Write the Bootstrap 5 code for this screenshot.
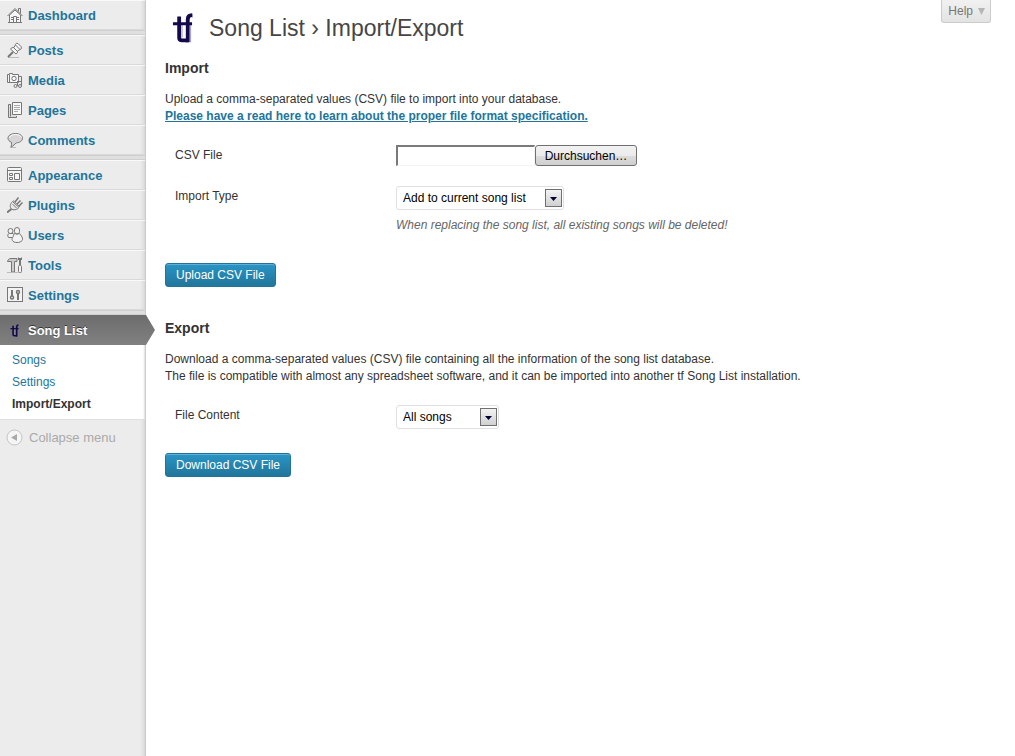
<!DOCTYPE html>
<html lang="en">
<head>
<meta charset="utf-8">
<meta name="viewport" content="width=device-width, initial-scale=1">
<title>Song List › Import/Export</title>
<link href="https://cdn.jsdelivr.net/npm/bootstrap@5.3.0/dist/css/bootstrap.min.css" rel="stylesheet">
<style>
  body { font: 12px/17px "Liberation Sans", Arial, sans-serif; color: #333; background: #fff; }
  a { color: #21759b; }
  .admin-side { width: 146px; background: linear-gradient(to left, #c6c6c6, #dedede 2px, #ececec 6px); }
  .side-link { height: 30px; padding: 0 0 0 7px; gap: 5px; font-size: 13px; font-weight: bold; color: #21759b; text-decoration: none; border-top: 1px solid rgba(255,255,255,.7); border-bottom: 1px solid #d9d9d9; margin-right: 1px; }
  .side-link svg { width: 16px; height: 16px; flex: none; fill: none; stroke: #777; stroke-width: 1; }
  .side-gap { height: 5px; background: #dfdfdf; border-top: 1px solid #cfcfcf; border-bottom: 1px solid #cfcfcf; margin-right: 1px; }
  .side-link.current { background: linear-gradient(#6d6d6d, #808080); border-color: #6d6d6d #6d6d6d #808080; color: #fff; text-shadow: 0 -1px 0 #333; }
  .side-link.current::after { content: ""; position: absolute; left: 100%; top: -1px; width: 10px; height: 30px; background: linear-gradient(#6d6d6d, #808080); clip-path: polygon(0 0, 10% 0, 100% 50%, 10% 100%, 0 100%); }
  .side-sub { background: linear-gradient(to left, #dedede, #fff 2px); padding: 4px 0 4px 12px; border-bottom: 1px solid #dfdfdf; line-height: 22px; margin-right: 1px; }
  .side-sub a { text-decoration: none; display: block; }
  .side-sub a.here { color: #333; font-weight: bold; }
  .collapse-btn { background: none; border: 0; padding: 9px 0 0 6px; gap: 6px; color: #aaa; font-size: 13px; }
  .brand-mark { fill: none; stroke: #120a4a; }
  .admin-main { padding: 0 24px 24px 19px; }
  .help-tab { right: 24px; top: 0; height: 23px; padding: 0 4px 2px 6px; border: 1px solid #ccc; border-top: 0; border-radius: 0 0 3px 3px; background: linear-gradient(#f1f1f1, #e3e3e3); color: #777; line-height: 22px; }
  .page-head { padding: 12px 0 0 7px; gap: 16px; }
  .page-title { font-size: 23px; line-height: 29px; color: #464646; font-weight: normal; }
  .first-part { padding-top: 15px; }
  .part-title { font-size: 14px; line-height: 18px; font-weight: bold; margin: 0; }
  .part-intro { margin: 14px 0 20px; }
  .form-line { padding-left: 10px; }
  .form-line + .form-line { padding-top: 20px; }
  .form-line > label { width: 221px; flex: none; padding-top: 2px; }
  .file-path { width: 139px; height: 21px; padding: 1px 3px; border: 1px solid #f4f4f4; border-top: 2px solid #7a7a7a; border-left: 2px solid #7a7a7a; background: #fff; }
  .browse-btn { width: 102px; height: 21px; padding: 0; border: 1px solid #707070; border-radius: 3px; background: linear-gradient(#f2f2f2, #ebebeb 50%, #dddddd 50%, #cfcfcf); color: #000; line-height: 20px; }
  .pick { appearance: none; height: 24px; padding: 0 6px; border: 1px solid #dfdfdf; border-radius: 3px; color: #000; line-height: 16px; background: #fff url("data:image/svg+xml,%3Csvg xmlns='http://www.w3.org/2000/svg' width='17' height='18'%3E%3ClinearGradient id='g' x2='0' y2='1'%3E%3Cstop stop-color='%23f4f4f4'/%3E%3Cstop offset='1' stop-color='%23cfcfcf'/%3E%3C/linearGradient%3E%3Crect x='.5' y='.5' width='16' height='17' fill='url(%23g)' stroke='%23707070'/%3E%3Cpath d='M5 8h7L8.500 12z' fill='%23000033'/%3E%3C/svg%3E") no-repeat right 1px center; }
  .pick-wide { width: 168px; }
  .pick-small { width: 103px; }
  .go-btn { height: 24px; padding: 0 10px; border: 1px solid #21759b; border-radius: 3px; background: linear-gradient(#2a95c5, #21759b); color: #fff; line-height: 22px; box-shadow: inset 0 1px 0 #5cb0d8; }
  .hint { color: #666; font-style: italic; margin: 7px 0 5px; }
</style>
</head>
<body>
<svg class="d-none">
  <symbol id="tf-mark" viewBox="0 0 22 32">
    <path stroke="#9a96bb" stroke-width="1" d="M10.500 13V26M19.500 13V31M21.500 1V5"/>
    <path stroke-width="4" d="M7.500 4V26Q7.500 29 10.500 29H17"/>
    <path stroke-width="4" d="M16.500 31V7Q16.500 2.500 21 2.500"/>
    <path stroke-width="3" d="M1 11.500H21"/>
  </symbol>
</svg>
<div class="d-flex min-vh-100">
  <nav class="admin-side flex-shrink-0" aria-label="Admin menu">
    <a class="side-link d-flex align-items-center" href="#"><svg viewBox="0 0 16 16"><path fill="#f6f6f6" d="M2.500 8v7.500h11V8L8 3z"/><path d="M.5 9 8 1.500 15.500 9M11.500 4.500v-3h2v5M6.500 15V9.500h3V15M4 10.500h2M10 10.500h2M4 12.500h2M10 12.500h2M1 15.500h14"/></svg>Dashboard</a>
    <div class="side-gap"></div>
    <a class="side-link d-flex align-items-center" href="#"><svg viewBox="0 0 16 16"><path stroke="#bbb" d="M1 15.500h11"/><path stroke-width="2" d="M6 10 1 15"/><path fill="#f6f6f6" d="M8.500 2.500Q9 .5 11 1.500l3 3Q15.500 7 13 7.500L10.500 9q.5 2-1.500 3L3.500 7Q5 5 7 5.500z"/><path d="m8.500 3 4.500 4.500M7 6l3 3"/></svg>Posts</a>
    <a class="side-link d-flex align-items-center" href="#"><svg viewBox="0 0 16 16"><path fill="#f6f6f6" d="M.5 2.500h2v-1h3v1h6v8H.5zM2.500 3v7"/><circle cx="7" cy="6.500" r="2.200"/><path d="M12 4.500h2.500V14M10.500 9v5M10.500 9.500h4"/><circle cx="8.500" cy="14" r="1.500"/><circle cx="13" cy="14" r="1.500"/></svg>Media</a>
    <a class="side-link d-flex align-items-center" href="#"><svg viewBox="0 0 16 16"><path fill="#ddd" d="M4 2.500H1.500v13h8V14"/><path d="M3.500 2v12.500"/><path fill="#f8f8f8" d="M5.500.5h9v12h-9z"/><path stroke="#aaa" d="M7 3.500h6M7 5.500h6M7 7.500h6M7 9.500h4"/></svg>Pages</a>
    <a class="side-link d-flex align-items-center" href="#"><svg viewBox="0 0 16 16"><path stroke="#bbb" d="M3 15.500h6"/><path fill="#d6d6d6" d="M8.500 1.500c4 0 7 2 7 4.700s-3 4.600-6 4.600c-2 1-3 3.500-5.500 4.200.5-1.500.8-3 .5-4.700-2-.8-3.500-2.100-3.500-4.100C1 3.500 4 1.500 8.500 1.500z"/><path stroke="#fff" d="M2.500 5.500c1-2 3-3 6-3s5 1 6 3"/></svg>Comments</a>
    <div class="side-gap"></div>
    <a class="side-link d-flex align-items-center" href="#"><svg viewBox="0 0 16 16"><rect fill="#f6f6f6" x=".5" y=".5" width="14" height="14" rx="1"/><path d="M1 3.500h13M2.500 6.500h3v2h-3zM2.500 10.500h3v2h-3zM7.500 6.500h5v6h-5z"/></svg>Appearance</a>
    <a class="side-link d-flex align-items-center" href="#"><svg viewBox="0 0 16 16"><path stroke-width="2" d="M4.500 12 0 15.500"/><path fill="#e8e8e8" d="M5.500 4.500 12 10.500C10 13 6 13.500 4.500 12 2.500 10 3 7 5.500 4.500z"/><path d="m6 3.500 7 6.500M5.500 7l4 4"/><path stroke-width="1.500" d="M8 5 11.500.5M10 7l3.500-3.500M12 9l3.500-3.500"/></svg>Plugins</a>
    <a class="side-link d-flex align-items-center" href="#"><svg viewBox="0 0 16 16"><g fill="#f3f3f3"><circle cx="3.500" cy="4" r="2.500"/><path d="M5.500 10.500h-4C0 8.500 1 6.500 2.500 6.500h4"/><rect x="7.500" y=".5" width="5" height="6.500" rx="2.500"/><path d="M8 6.500C5.500 7.500 7 9 6 10c-2 2-1 5.500 4 5.500s6.500-3 5-5.500c-1-1.500-1-2.500-3-3.500-1.500 1-2.500 1-4 0z"/></g></svg>Users</a>
    <a class="side-link d-flex align-items-center" href="#"><svg viewBox="0 0 16 16"><path fill="#ccc" d="M.5 4.500C1 2.500 2 1.500 4 1.500h6v3H7.500v10.500h-3V4.500z"/><path d="M12.500 1v7M13.500 1v7M11.500 3V.5M14.500 3V.5"/><rect fill="#f3f3f3" x="11.500" y="8.500" width="3" height="7" rx="1"/><path stroke="#bbb" d="M0 15.500h11"/></svg>Tools</a>
    <a class="side-link d-flex align-items-center" href="#"><svg viewBox="0 0 16 16"><rect fill="#f3f3f3" x=".5" y=".5" width="15" height="14"/><path stroke-width="2" d="M5 3v6M11 7v6"/><circle stroke-width="1.500" cx="5" cy="10.500" r="1.500"/><circle stroke-width="1.500" cx="11" cy="5" r="1.500"/></svg>Settings</a>
    <div class="side-gap"></div>
    <a class="side-link current d-flex align-items-center position-relative" href="#" aria-current="true"><svg class="brand-mark" viewBox="0 0 16 16"><use href="#tf-mark" x="1" y="2" width="13" height="13" stroke="#120a4a"/></svg>Song List</a>
    <div class="side-sub">
      <a href="#">Songs</a>
      <a href="#">Settings</a>
      <a class="here" href="#" aria-current="page">Import/Export</a>
    </div>
    <button class="collapse-btn d-flex align-items-center w-100" type="button"><svg width="17" height="17" viewBox="0 0 17 17"><circle cx="8.500" cy="8.500" r="7.500" fill="#f5f5f5" stroke="#c4c4c4"/><path d="M11 5v7L5 8.500z" fill="#aaa"/></svg>Collapse menu</button>
  </nav>

  <main class="admin-main flex-grow-1 position-relative">
    <button class="help-tab position-absolute d-flex gap-1" type="button">Help <svg width="9" height="20" viewBox="0 0 9 20"><path d="M1 8h7l-3.500 7z" fill="#b5b5b5"/></svg></button>
    <header class="page-head d-flex align-items-center">
      <svg class="brand-mark" width="21" height="32" viewBox="0 0 22 32" aria-hidden="true"><use href="#tf-mark"/></svg>
      <h1 class="page-title m-0">Song List › Import/Export</h1>
    </header>

    <section class="first-part">
      <h2 class="part-title">Import</h2>
      <p class="part-intro">Upload a comma-separated values (CSV) file to import into your database.<br><a class="fw-bold" href="#">Please have a read here to learn about the proper file format specification.</a></p>
      <form>
        <div class="form-line d-flex">
          <label for="csv-file">CSV File</label>
          <div class="d-flex flex-wrap"><input class="file-path" id="csv-file" type="text"><button class="browse-btn" type="button">Durchsuchen…</button></div>
        </div>
        <div class="form-line d-flex">
          <label for="import-type">Import Type</label>
          <div>
            <select class="pick pick-wide" id="import-type"><option>Add to current song list</option><option>Replace current song list</option></select>
            <p class="hint">When replacing the song list, all existing songs will be deleted!</p>
          </div>
        </div>
        <button class="go-btn mt-4" type="submit">Upload CSV File</button>
      </form>
    </section>

    <section class="mt-3 pt-3">
      <h2 class="part-title">Export</h2>
      <p class="part-intro">Download a comma-separated values (CSV) file containing all the information of the song list database.<br>The file is compatible with almost any spreadsheet software, and it can be imported into another tf Song List installation.</p>
      <form>
        <div class="form-line d-flex">
          <label for="file-content">File Content</label>
          <select class="pick pick-small" id="file-content"><option>All songs</option></select>
        </div>
        <button class="go-btn mt-4" type="submit">Download CSV File</button>
      </form>
    </section>
  </main>
</div>
<script src="https://cdn.jsdelivr.net/npm/bootstrap@5.3.0/dist/js/bootstrap.bundle.min.js"></script>
</body>
</html>
